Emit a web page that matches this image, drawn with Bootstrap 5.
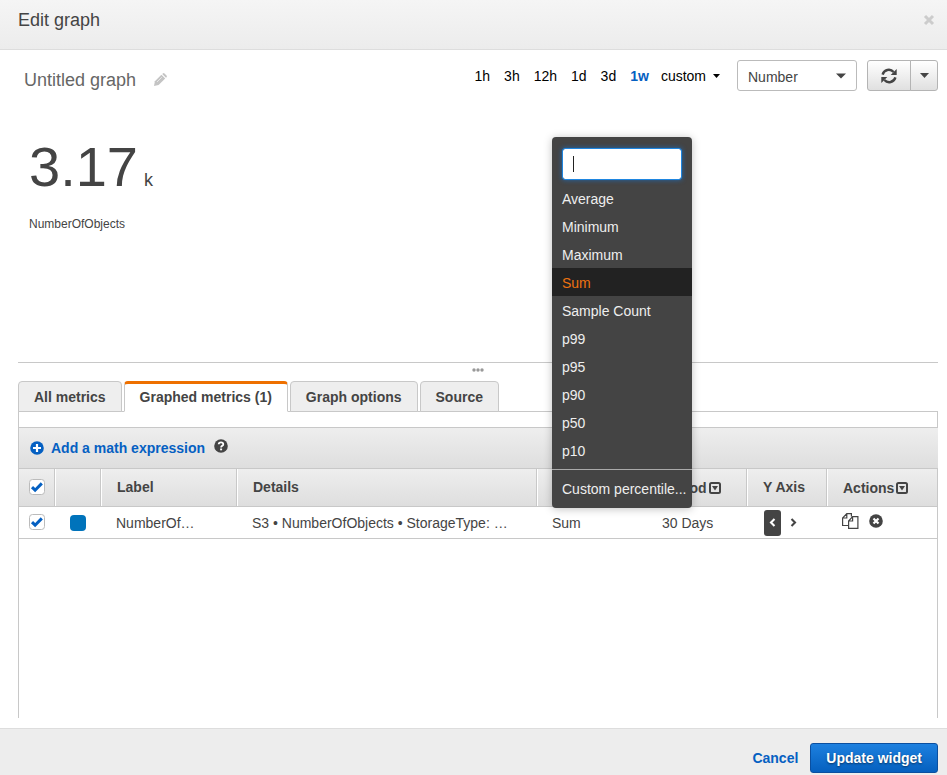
<!DOCTYPE html>
<html lang="en">
<head>
<meta charset="utf-8">
<meta name="viewport" content="width=device-width, initial-scale=1">
<title>Edit graph</title>
<link href="https://cdn.jsdelivr.net/npm/bootstrap@5.3.0/dist/css/bootstrap.min.css" rel="stylesheet">
<style>
body { font-family: "Liberation Sans", Arial, sans-serif; font-size: 14px; line-height: 20px; color: #444; }
a { color: #0560c2; text-decoration: none; }
.dialog-head { background: linear-gradient(#f5f5f5, #ececec); border-bottom: 1px solid #ddd; height: 50px; padding: 0 12px 9px 18px; font-size: 18px; }
.dialog-title { font-size: 18px; line-height: 24px; font-weight: 400; color: #444; }
.close-btn { color: #ccc; }
.graph-bar { padding: 10px 9px 0 24px; }
.graph-name { font-size: 18px; line-height: 22px; color: #666; }
.rename-btn { margin-left: 18px; margin-bottom: 5px; }
.range-links { gap: 14px; margin-right: 17px; }
.range-links a, .custom-btn { color: #000; }
.range-links a.current { color: #0560c2; font-weight: 700; }
.custom-btn { margin-left: -2px; gap: 7px; font-size: 14px; line-height: 20px; }
.type-select { width: 120px; height: 31px; font-size: 14px; line-height: 20px; padding: 6px 24px 3px 10px; color: #444; border: 1px solid #bbb; border-radius: 3px; margin-right: 10px;
  background-image: url("data:image/svg+xml,%3csvg xmlns='http://www.w3.org/2000/svg' viewBox='0 0 10 6'%3e%3cpath d='M0 .5h10L5 5.5z' fill='%23444'/%3e%3c/svg%3e"); background-size: 10px 6px; background-position: right 10px center; }
.grey-btn { height: 31px; padding: 0; border: 1px solid #b4b4b4; background: linear-gradient(#fff, #e0e0e0); color: #444; border-radius: 3px; line-height: 1; }
.grey-btn.wide { width: 44px; }
.grey-btn.slim { width: 28px; }
.graph-area { height: 271px; padding: 44px 29px 0; }
.big-value { font-size: 56px; line-height: 64px; gap: 6px; }
.big-unit { font-size: 18px; }
.value-label { font-size: 12px; line-height: 16px; margin-top: 4px; }
.splitter { margin: 0 9px 0 18px; border-top: 1px solid #c8c8c8; height: 19px; padding-top: 5px; line-height: 0; }
.metrics-pane { margin: 0 9px 10px 18px; }
.metric-tabs { gap: 2px; border-bottom: 1px solid #c8c8c8; }
.metric-tabs .nav-link { height: 31px; padding: 5px 15px; font-weight: 700; line-height: 20px; color: #444; background: #eee; border: 1px solid #c8c8c8; border-radius: 4px 4px 0 0; margin-bottom: -1px; }
.metric-tabs .nav-link.active { color: #444; background: #fff; border-color: #ee7000 #c8c8c8 #fff; border-top-width: 3px; padding-top: 3px; }
.metric-body { border: solid #c8c8c8; border-width: 0 1px; padding-top: 15px; }
.math-bar { height: 41px; margin-right: -1px; padding: 0 11px; border-top: 1px solid #c8c8c8; background: linear-gradient(#eee, #dedede); }
.math-bar a { gap: 7px; }
.help-btn { margin-left: 9px; margin-bottom: 4px; color: #444; }
.metric-table { table-layout: fixed; width: 100%; border-collapse: separate; border-spacing: 0; }
.metric-table th { height: 39px; padding: 0 0 1px 16px; border: solid #c8c8c8; border-width: 1px 1px 1px 0; background: linear-gradient(#eee, #dedede); box-shadow: inset 1px 0 #fff; white-space: nowrap; }
.metric-table th:first-child { box-shadow: none; }
.metric-table th:last-child { border-right: 0; }
.metric-table td { height: 32px; padding: 0 0 0 15px; border-bottom: 1px solid #c8c8c8; white-space: nowrap; }
.metric-table .tick-cell { padding: 0 0 2px 10px; }
.w-tick { width: 36px; } .w-swatch { width: 46px; } .w-label { width: 136px; } .w-stat { width: 110px; }
.w-period { width: 100px; } .w-axis { width: 80px; } .w-actions { width: 110px; }
.sort-head { gap: 2px; padding-top: 2px; }
.tick-box { width: 16px; height: 16px; margin: 0; display: block; border: 1px solid #bbb; border-radius: 3px; background-color: #fff; }
.tick-box:checked { background-color: #fff; border-color: #bbb; background-image: url("data:image/svg+xml,%3csvg xmlns='http://www.w3.org/2000/svg' viewBox='0 0 14 14'%3e%3cpath d='M2 7.2l3.1 3L11.8 3.4' fill='none' stroke='%230560c2' stroke-width='3'/%3e%3c/svg%3e"); }
.swatch { width: 16px; height: 16px; border-radius: 4px; background: #0073bb; }
.axis-btn { width: 17px; height: 26px; border-radius: 3px; color: #444; }
.axis-btn.on { background: #444; color: #fff; }
.metric-table .icon-cell { padding: 0 0 0 17px; }
.row-icons { gap: 10px; padding-bottom: 3px; }
.stat-menu { position: absolute; left: 15px; bottom: calc(100% - 1px); z-index: 10; width: 140px; padding: 11px 0 6px; background: #444; border-radius: 4px; box-shadow: 0 1px 8px rgba(0,0,0,.25); }
.stat-menu .search-wrap { margin: 0 10px 4px; }
.stat-menu .search-box { height: 32px; border: 1px solid #1f86e0; border-radius: 3px; box-shadow: 0 0 5px rgba(20,120,220,.7); padding: 4px 10px; font-size: 14px; }
.text-cursor { position: absolute; left: 11px; top: 8px; width: 1px; height: 16px; background: #222; }
.stat-item { display: block; width: 100%; border: 0; background: none; text-align: left; height: 28px; padding: 5px 10px 3px; line-height: 20px; color: #eee; }
.stat-item.picked { background: #222; color: #ec7211; }
.stat-menu hr { margin: 5px 0 4px; border-top: 1px solid #aaa; opacity: 1; }
.dialog-foot { border-top: 1px solid #ddd; background: #ededed; padding: 14px 9px 2px; gap: 12px; }
.update-btn { height: 30px; padding: 0 15px; font-size: 14px; line-height: 20px; font-weight: 700; color: #fff; border: 1px solid #0a4fa0; border-radius: 3px; background: linear-gradient(#1d80df, #0560bf); text-shadow: 0 1px 2px rgba(0,0,0,.5); }
.update-btn:hover { color: #fff; }
svg { display: block; flex: none; }
</style>
<script src="https://cdn.jsdelivr.net/npm/bootstrap@5.3.0/dist/js/bootstrap.bundle.min.js"></script>
</head>
<body class="d-flex flex-column min-vh-100">
<header class="dialog-head d-flex align-items-center justify-content-between">
  <h1 class="dialog-title m-0">Edit graph</h1>
  <button class="close-btn border-0 bg-transparent p-0" type="button" aria-label="Close">
    <svg width="12" height="12" viewBox="0 0 12 12"><path d="M2 2l8 8M10 2l-8 8" stroke="currentColor" stroke-width="3"/></svg>
  </button>
</header>

<main class="d-flex flex-column flex-grow-1">
  <div class="graph-bar d-flex align-items-center">
    <h2 class="graph-name m-0 align-self-end">Untitled graph</h2>
    <button class="rename-btn border-0 bg-transparent p-0 align-self-end" type="button" aria-label="Rename graph">
      <svg width="13" height="13" viewBox="0 0 13 13"><g fill="#c4c4c4"><path d="M7.400 1.800l3.800 3.800-6.600 6.500L0 13l.9-4.700z"/><path d="M8.200 1l.6-.5q.9-.8 1.700 0l2 2q.8.8 0 1.700l-.5.600z"/></g><path d="M3 9l4.800-4.800" stroke="#e8e8e8" stroke-width="1"/></svg>
    </button>
    <nav class="range-links d-flex ms-auto" aria-label="Time range">
      <a href="#">1h</a><a href="#">3h</a><a href="#">12h</a><a href="#">1d</a><a href="#">3d</a><a href="#" class="current">1w</a>
      <button class="custom-btn d-flex align-items-center border-0 bg-transparent p-0" type="button">custom
        <svg width="7" height="4" viewBox="0 0 7 4"><path d="M0 0h7L3.500 4z" fill="#000"/></svg></button>
    </nav>
    <select class="type-select form-select" aria-label="Graph type"><option>Number</option><option>Line</option><option>Stacked area</option></select>
    <div class="btn-group" role="group" aria-label="Refresh">
      <button class="grey-btn wide btn d-flex align-items-center justify-content-center" type="button" aria-label="Refresh">
        <svg width="16" height="16" viewBox="0 0 16 16"><path d="M1.600 6.600A6.400 6.400 0 0 1 12.600 4M14.400 9.400A6.400 6.400 0 0 1 3.400 12" fill="none" stroke="currentColor" stroke-width="2.400"/><path d="M15.700 1v6h-6zM.3 15V9h6z" fill="currentColor"/></svg>
      </button>
      <button class="grey-btn slim btn d-flex align-items-center justify-content-center" type="button" aria-label="Refresh options">
        <svg width="9" height="5" viewBox="0 0 9 5"><path d="M0 0h9L4.500 5z" fill="currentColor"/></svg>
      </button>
    </div>
  </div>

  <section class="graph-area">
    <div class="big-value d-flex align-items-baseline"><span>3.17</span><span class="big-unit">k</span></div>
    <div class="value-label">NumberOfObjects</div>
  </section>

  <div class="splitter d-flex justify-content-center">
    <svg width="12" height="4" viewBox="0 0 12 4"><g fill="#999"><circle cx="2" cy="2" r="1.700"/><circle cx="6" cy="2" r="1.700"/><circle cx="10" cy="2" r="1.700"/></g></svg>
  </div>

  <section class="metrics-pane d-flex flex-column flex-grow-1">
    <div class="metric-tabs nav nav-tabs" role="tablist">
      <button class="nav-link" type="button" role="tab">All metrics</button>
      <button class="nav-link active" type="button" role="tab" aria-selected="true">Graphed metrics (1)</button>
      <button class="nav-link" type="button" role="tab">Graph options</button>
      <button class="nav-link" type="button" role="tab">Source</button>
    </div>
    <div class="metric-body flex-grow-1">
      <div class="math-bar d-flex align-items-center">
        <a href="#" class="d-flex align-items-center fw-bold">
          <svg width="14" height="14" viewBox="0 0 14 14"><circle cx="7" cy="7" r="6.800" fill="currentColor"/><path d="M7 3v8M3 7h8" stroke="#fff" stroke-width="2.200"/></svg>
          Add a math expression</a>
        <button class="help-btn border-0 bg-transparent p-0" type="button" aria-label="Help">
          <svg width="14" height="14" viewBox="0 0 14 14"><circle cx="7" cy="7" r="6.800" fill="currentColor"/><path d="M4.700 5.300Q4.800 3.300 7 3.300T9.300 5.200Q9.300 6.300 8.100 6.900Q7.100 7.400 7.100 8.500" fill="none" stroke="#fff" stroke-width="1.800"/><path d="M6.100 9.500h2v1.800h-2z" fill="#fff"/></svg>
        </button>
      </div>
      <table class="metric-table">
        <colgroup><col class="w-tick"><col class="w-swatch"><col class="w-label"><col><col class="w-stat"><col class="w-period"><col class="w-axis"><col class="w-actions"></colgroup>
        <thead>
          <tr>
            <th class="tick-cell"><input class="tick-box form-check-input" type="checkbox" checked aria-label="Select all metrics"></th>
            <th></th>
            <th scope="col">Label</th>
            <th scope="col">Details</th>
            <th scope="col">Statistic</th>
            <th scope="col"><div class="sort-head d-flex align-items-center">Period
              <svg width="12" height="12" viewBox="0 0 12 12"><rect x="1" y="1" width="10" height="10" rx="1.500" fill="none" stroke="#444" stroke-width="2"/><path d="M3 4h6L6 8.400z" fill="#444"/></svg></div></th>
            <th scope="col">Y Axis</th>
            <th scope="col"><div class="sort-head d-flex align-items-center">Actions
              <svg width="12" height="12" viewBox="0 0 12 12"><rect x="1" y="1" width="10" height="10" rx="1.500" fill="none" stroke="#444" stroke-width="2"/><path d="M3 4h6L6 8.400z" fill="#444"/></svg></div></th>
          </tr>
        </thead>
        <tbody>
          <tr>
            <td class="tick-cell"><input class="tick-box form-check-input" type="checkbox" checked aria-label="Select NumberOfObjects"></td>
            <td><div class="swatch"></div></td>
            <td>NumberOf…</td>
            <td>S3 • NumberOfObjects • StorageType: …</td>
            <td class="position-relative">Sum
              <div class="stat-menu" role="listbox" aria-label="Statistic">
                <div class="search-wrap position-relative">
                  <input class="search-box form-control" type="text" aria-label="Find a statistic">
                  <span class="text-cursor"></span>
                </div>
                <button class="stat-item" type="button">Average</button>
                <button class="stat-item" type="button">Minimum</button>
                <button class="stat-item" type="button">Maximum</button>
                <button class="stat-item picked" type="button">Sum</button>
                <button class="stat-item" type="button">Sample Count</button>
                <button class="stat-item" type="button">p99</button>
                <button class="stat-item" type="button">p95</button>
                <button class="stat-item" type="button">p90</button>
                <button class="stat-item" type="button">p50</button>
                <button class="stat-item" type="button">p10</button>
                <hr>
                <button class="stat-item" type="button">Custom percentile...</button>
              </div>
            </td>
            <td>30 Days</td>
            <td class="icon-cell"><div class="d-flex gap-1">
              <button class="axis-btn on border-0 p-0 d-flex align-items-center justify-content-center" type="button" aria-label="Left axis"><svg width="7" height="9" viewBox="0 0 7 9"><path d="M5.500 1L2 4.500 5.500 8" fill="none" stroke="currentColor" stroke-width="2.100"/></svg></button>
              <button class="axis-btn border-0 bg-transparent p-0 d-flex align-items-center justify-content-center" type="button" aria-label="Right axis"><svg width="7" height="9" viewBox="0 0 7 9"><path d="M1.500 1L5 4.500 1.500 8" fill="none" stroke="currentColor" stroke-width="2.100"/></svg></button>
            </div></td>
            <td><div class="row-icons d-flex align-items-center">
              <button class="border-0 bg-transparent p-0" type="button" aria-label="Duplicate"><svg width="17" height="16" viewBox="0 0 17 16"><path d="M6.500 12.500H.6V5L4.800.6h4.600v3M4.800.6V5H.6M6.600 15.400V8l4-4.400h5.300v11.800zM10.600 3.600V8h-4" fill="none" stroke="#444" stroke-width="1.200"/></svg></button>
              <button class="border-0 bg-transparent p-0" type="button" aria-label="Remove"><svg width="14" height="14" viewBox="0 0 14 14"><circle cx="7" cy="7" r="6.800" fill="#444"/><path d="M4.500 4.500l5 5M9.500 4.500l-5 5" stroke="#fff" stroke-width="2.200"/></svg></button>
            </div></td>
          </tr>
        </tbody>
      </table>
    </div>
  </section>
</main>

<footer class="dialog-foot d-flex align-items-center justify-content-end">
  <a href="#" class="fw-bold">Cancel</a>
  <button class="update-btn btn" type="button">Update widget</button>
</footer>
</body>
</html>
